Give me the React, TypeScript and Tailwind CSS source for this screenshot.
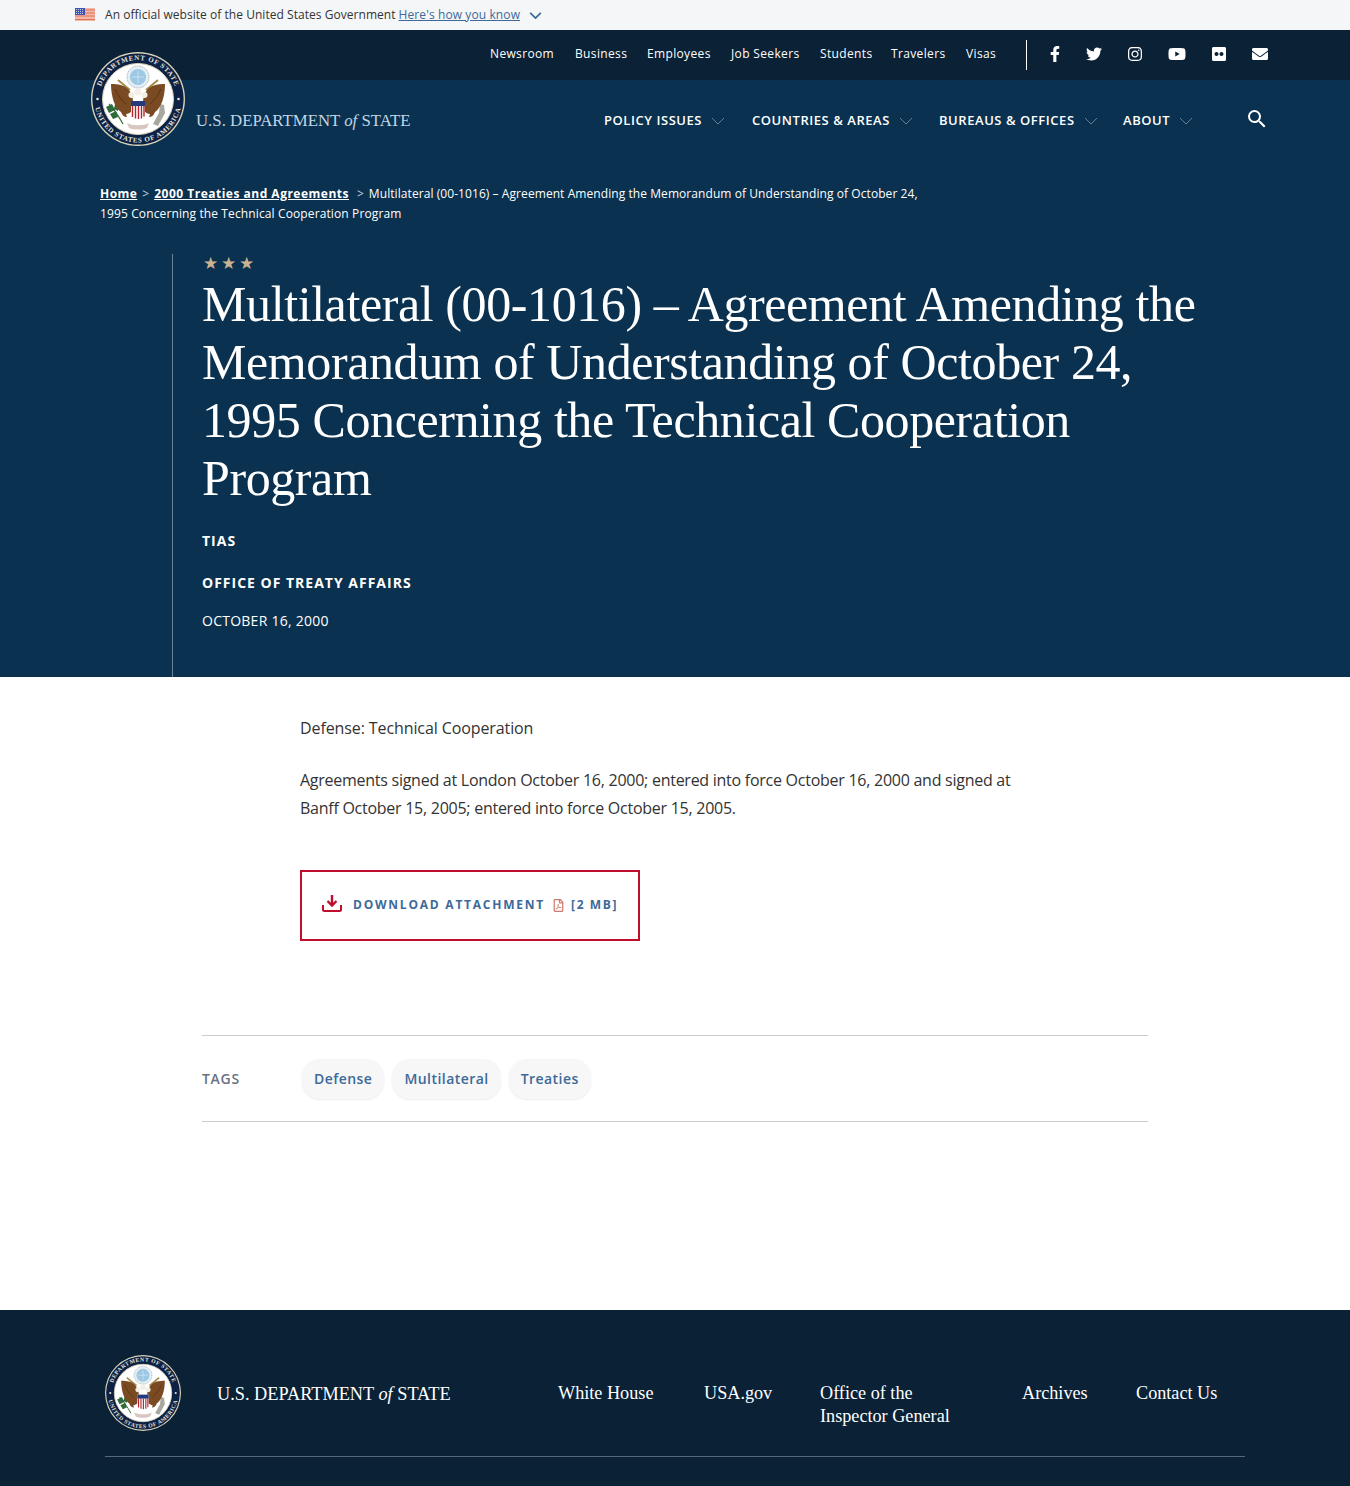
import { FC } from 'react';
import {
  FaEnvelope,
  FaFacebookF,
  FaFlickr,
  FaInstagram,
  FaRegFilePdf,
  FaTwitter,
  FaYoutube,
} from 'react-icons/fa';
import { MdSearch } from 'react-icons/md';

const sans = "font-['Open_Sans','Liberation_Sans',sans-serif]";
const serif = "font-['Liberation_Serif',serif]";

const Seal: FC<{ id: string; className: string }> = ({ id, className }) => (
  <svg viewBox="0 0 94 94" className={className}>
    <circle cx="47" cy="47" r="47" fill="#d8d3b8" />
    <circle cx="47" cy="47" r="45.600" fill="#0d2145" />
    <circle cx="47" cy="47" r="35.500" fill="#ffffff" stroke="#d8d3b8" strokeWidth="1" />
    <defs>
      <path id={`${id}-top`} d="M8 47a39 39 0 0 1 78 0" />
      <path id={`${id}-bottom`} d="M3.500 47a43.500 43.500 0 0 0 87 0" />
    </defs>
    <text fontSize="7" fontWeight="700" fill="#e6e6dc" fontFamily="Liberation Serif, serif" letterSpacing="0.7">
      <textPath href={`#${id}-top`} startOffset="50%" textAnchor="middle">
        DEPARTMENT OF STATE
      </textPath>
    </text>
    <text fontSize="7" fontWeight="700" fill="#e6e6dc" fontFamily="Liberation Serif, serif" letterSpacing="0.7">
      <textPath href={`#${id}-bottom`} startOffset="50%" textAnchor="middle">
        UNITED STATES OF AMERICA
      </textPath>
    </text>
    <circle cx="6.500" cy="47" r="1.300" fill="#e6e6dc" />
    <circle cx="87.500" cy="47" r="1.300" fill="#e6e6dc" />
    {/* glory */}
    <circle cx="47" cy="25" r="11" fill="#e4eef3" stroke="#8a9aa5" strokeWidth="0.800" strokeDasharray="1 0.800" />
    <circle cx="47" cy="25" r="8" fill="#9cc8e4" />
    <path d="M41 25h12M47 19v12" stroke="#d3e6f2" strokeWidth="0.800" />
    {/* arrows */}
    <path d="M27 28l12 10M67 28l-12 10" stroke="#a58a4a" strokeWidth="2" />
    {/* olive branch */}
    <path d="M18 52c5 5 9 11 14 20" stroke="#3f6b38" strokeWidth="1.200" fill="none" />
    <path d="M15 55l6-3 3 6-6 3zM19 62l6-3 2 6-5 2zM24 52l4 2-1 5-4-2z" fill="#2f6b3a" />
    {/* bundle of arrows */}
    <path d="M62 72l6-11 1-9 4 1 1 8-7 13z" fill="#a8a8a0" />
    {/* wings and body */}
    <path
      d="M20 32c7 0 13 1 17 5 3 3 5 8 5 13l-1 9c-2 2-4 3-6 3l1 3c-3 0-5-2-6-5-6-4-10-15-10-28z"
      fill="#7a4a22"
    />
    <path
      d="M74 32c-7 0-13 1-17 5-3 3-5 8-5 13l1 9c2 2 4 3 6 3l-1 3c3 0 5-2 6-5 6-4 10-15 10-28z"
      fill="#7a4a22"
    />
    <path d="M24 37c3 6 6 11 11 15M70 37c-3 6-6 11-11 15" stroke="#5a3417" strokeWidth="1" fill="none" />
    <circle cx="40.500" cy="43" r="3" fill="#f2efe4" />
    <circle cx="53.500" cy="43" r="3" fill="#f2efe4" />
    <circle cx="47" cy="40" r="3.500" fill="#f2efe4" />
    {/* shield */}
    <path d="M40 49h14v11c0 4-3.500 6-7 7.500-3.500-1.500-7-3.500-7-7.500z" fill="#ffffff" />
    <path d="M40 49h14v5h-14z" fill="#243a7a" />
    <path d="M41.500 54v11M44.500 54v12.500M47.500 54v13M50.500 54v12.500M53 54v10.500" stroke="#b5252f" strokeWidth="1.400" />
    {/* scroll */}
    <path d="M36 71c5 3 17 3 22 0l-2 5c-5 2-13 2-18 0z" fill="#d8c7c0" />
  </svg>
);

const UsFlag = () => (
  <svg viewBox="0 0 20 13" className="mb-[2px] h-[13px] w-5 shrink-0">
    <rect width="20" height="13" fill="#f3b9a6" />
    <path d="M0 2h20M0 5h20M0 8h20M0 11.500h20" stroke="#e0705c" strokeWidth="1" />
    <rect width="10" height="7" fill="#3f55b5" />
    <path d="M1 1.500h8M1 3.500h8M1 5.500h8" stroke="#dfe4f5" strokeWidth="0.800" strokeDasharray="1 1" />
  </svg>
);

const Chevron: FC<{ className: string }> = ({ className }) => (
  <svg viewBox="0 0 14 8" fill="none" stroke="currentColor" className={className}>
    <path d="M1 1l6 6 6-6" />
  </svg>
);

const Wordmark: FC<{ className: string }> = ({ className }) => (
  <span className={`${serif} whitespace-nowrap ${className}`}>
    U.S. DEPARTMENT <i className="lowercase">of</i> STATE
  </span>
);

const utilityLinks = [
  { label: 'Newsroom', className: 'w-[85px]' },
  { label: 'Business', className: 'w-[72px]' },
  { label: 'Employees', className: 'w-[84px]' },
  { label: 'Job Seekers', className: 'w-[89px]' },
  { label: 'Students', className: 'w-[71px]' },
  { label: 'Travelers', className: 'w-[75px]' },
  { label: 'Visas', className: 'w-[31px]' },
];

const socialIcons = [
  { Icon: FaFacebookF, className: 'ml-[18px]', size: 'size-4' },
  { Icon: FaTwitter, className: 'ml-[19px]', size: 'size-4' },
  { Icon: FaInstagram, className: 'ml-[21px]', size: 'size-4' },
  { Icon: FaYoutube, className: 'ml-[22px]', size: 'size-[18px]' },
  { Icon: FaFlickr, className: 'ml-[22px]', size: 'size-4' },
  { Icon: FaEnvelope, className: 'ml-[21px]', size: 'size-4' },
];

const mainNav = [
  { label: 'Policy Issues', className: 'w-[148px]' },
  { label: 'Countries & Areas', className: 'w-[187px]' },
  { label: 'Bureaus & Offices', className: 'w-[184px]' },
  { label: 'About', className: 'w-[72px]' },
];

const footerLinks = [
  { label: 'White House', className: 'w-[146px]' },
  { label: 'USA.gov', className: 'w-[116px]' },
  { label: 'Office of the Inspector General', className: 'w-[202px] pr-[50px]' },
  { label: 'Archives', className: 'w-[114px]' },
  { label: 'Contact Us', className: 'w-[84px] whitespace-nowrap' },
];

const tags = ['Defense', 'Multilateral', 'Treaties'];

const HEADLINE =
  'Multilateral (00-1016) – Agreement Amending the Memorandum of Understanding of October 24, 1995 Concerning the Technical Cooperation Program';

export default function App() {
  return (
    <div className={`${sans} min-h-[1486px] bg-white`}>
      {/* gov banner */}
      <div className="flex h-[30px] items-center bg-[#f5f6f7] pl-[75px] text-xs text-[#333]">
        <UsFlag />
        <span className="ml-2.5 tracking-[0.04px]">An official website of the United States Government</span>
        <a className="ml-[3px] tracking-[0.1px] text-[#3d6a99] underline">Here's how you know</a>
        <Chevron className="ml-[9px] h-[7px] w-[13px] text-[#3d6a99] [stroke-width:2]" />
      </div>

      {/* utility bar */}
      <div className="relative flex h-[50px] items-center bg-[#0a2136] pl-[490px] text-white">
        <nav className="mb-[3px] flex text-xs tracking-[0.35px]">
          {utilityLinks.map(link => (
            <a key={link.label} className={`${link.className} whitespace-nowrap`}>
              {link.label}
            </a>
          ))}
        </nav>
        <div className="ml-[29px] h-[30px] w-px bg-white" />
        <div className="mb-[2px] flex items-center">
          {socialIcons.map(({ Icon, className, size }, i) => (
            <span key={i} className={`${className} flex w-5 justify-center`}>
              <Icon className={size} />
            </span>
          ))}
        </div>
        <Seal id="head" className="absolute left-[91px] top-[22px] size-[94px]" />
      </div>

      {/* hero */}
      <section className="h-[597px] bg-[#0a314f] text-white">
        <div className="flex h-[82px] items-center pl-[196px]">
          <Wordmark className="w-[408px] text-[16.800px] text-[#c3d5e5]" />
          <nav className="flex text-[13px] font-semibold uppercase tracking-[0.55px]">
            {mainNav.map(item => (
              <a key={item.label} className={`${item.className} flex items-center whitespace-nowrap`}>
                {item.label}
                <Chevron className="ml-[9px] h-2 w-[14px] text-[#5f7f9a]" />
              </a>
            ))}
          </nav>
          <MdSearch className="mb-1 ml-[50px] size-[24px]" />
        </div>

        <div className="ml-[100px] mt-[22px] text-xs leading-5">
          <div className="whitespace-nowrap">
            <a className="font-bold tracking-[0.45px] underline">Home</a>
            <span className="mx-[5px] text-[#c3d5e5]">&gt;</span>
            <a className="font-bold tracking-[0.5px] underline">2000 Treaties and Agreements</a>
            <span className="ml-2 mr-[5px] text-[#c3d5e5]">&gt;</span>
            <span className="tracking-[0.07px]">
              Multilateral (00-1016) – Agreement Amending the Memorandum of Understanding of October 24,
            </span>
          </div>
          <div className="tracking-[0.12px]">1995 Concerning the Technical Cooperation Program</div>
        </div>

        <div className="ml-[172px] mt-[30px] h-[423px] border-l border-[#6d8397] pl-[29px]">
          <div className="-ml-px flex h-4 items-center text-[17px] leading-none text-[#c9b48f]">
            <span className="w-[18px] text-center">★</span>
            <span className="w-[18px] text-center">★</span>
            <span className="w-[18px] text-center">★</span>
          </div>
          <h1 className={`${serif} mt-[5px] w-[1010px] text-[50px] leading-[58px] tracking-[-0.4px]`}>
            {HEADLINE}
          </h1>
          <p className="mt-6 text-sm font-bold uppercase leading-5 tracking-[1px]">TIAS</p>
          <p className="mt-[22px] text-sm font-bold uppercase leading-5 tracking-[1px]">
            Office of Treaty Affairs
          </p>
          <p className="mt-[18px] text-sm uppercase leading-5 tracking-[0.25px]">October 16, 2000</p>
        </div>
      </section>

      {/* article */}
      <main className="pl-[300px] pt-[37px] text-base leading-7 tracking-[-0.26px] text-[#333]">
        <p className="tracking-[-0.1px]">Defense: Technical Cooperation</p>
        <p className="mt-6 w-[730px]">
          Agreements signed at London October 16, 2000; entered into force October 16, 2000 and
          signed at Banff October 15, 2005; entered into force October 15, 2005.
        </p>
        <a className="mt-[48px] flex h-[71px] w-[340px] items-center border-2 border-[#c00d2d] pl-5 tracking-normal">
          <svg viewBox="0 0 20 18" fill="none" className="mb-[6px] h-[18px] w-5 text-[#c00d2d]">
            <path d="M10 1v10M5.500 7l4.500 4.500L14.500 7" stroke="currentColor" strokeWidth="2.400" />
            <path d="M1 11v4.500c0 1 .6 1.500 1.500 1.500h15c.9 0 1.500-.5 1.500-1.500V11" stroke="currentColor" strokeWidth="2" />
          </svg>
          <span className="mb-[2px] ml-[11px] text-xs font-bold uppercase tracking-[1.770px] text-[#3d6a99]">
            Download Attachment
          </span>
          <FaRegFilePdf className="ml-[7px] size-[13px] text-[#d0786c]" />
          <span className="mb-[2px] ml-[6px] text-xs font-bold tracking-[1.600px] text-[#3d6a99]">[2 MB]</span>
        </a>
      </main>

      {/* tags */}
      <div className="mx-[202px] mt-[94px] flex h-[87px] items-center border-y border-[#ccc]">
        <span className="w-[100px] text-sm font-semibold uppercase tracking-[0.7px] text-[#6b7280]">
          Tags
        </span>
        <div className="flex gap-2">
          {tags.map(tag => (
            <a
              key={tag}
              className="flex h-10 items-center rounded-[18px] bg-[#f7f7f8] px-3 text-sm font-semibold tracking-[0.45px] text-[#3d6a99] shadow-[0_1px_2px_rgba(0,0,0,0.08)]"
            >
              {tag}
            </a>
          ))}
        </div>
      </div>

      {/* footer */}
      <footer className="mt-[188px] h-[176px] bg-[#0a2136] px-[105px] pt-[45px] text-white">
        <div className="flex h-[102px] items-start border-b border-[#56687a]">
          <Seal id="foot" className="size-[76px] shrink-0" />
          <Wordmark className="ml-9 mt-[26px] w-[341px] text-[18.300px]" />
          <nav className={`${serif} mt-[27px] flex text-[18.200px] leading-[23px]`}>
            {footerLinks.map(link => (
              <a key={link.label} className={link.className}>
                {link.label}
              </a>
            ))}
          </nav>
        </div>
      </footer>
    </div>
  );
}
